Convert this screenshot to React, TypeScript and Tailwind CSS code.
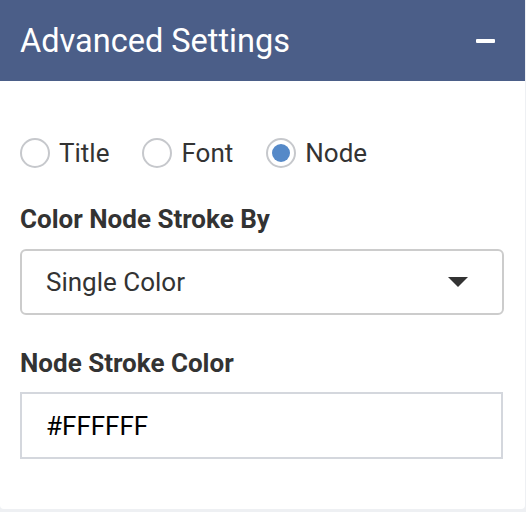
import React, { useState } from "react";

const options = ["Title", "Font", "Node"];

function Radio({ label, checked, onClick }: { label: string; checked: boolean; onClick: () => void }) {
  return (
    <button onClick={onClick} className="flex items-center gap-[9px]">
      <span className="w-[30px] h-[30px] rounded-full border-2 border-[#c6c8cc] bg-white flex items-center justify-center">
        {checked && <span className="w-[18px] h-[18px] rounded-full bg-[#5589c8]" />}
      </span>
      <span className="text-[26px] leading-[30px] text-[#333333]">{label}</span>
    </button>
  );
}

export default function App() {
  const [tab, setTab] = useState("Node");
  return (
    <div className="w-[526px] h-[512px] bg-[#eef0f3] font-['Roboto',sans-serif]">
      <div className="w-[525px] h-[509px] bg-white rounded-b-[4px] flex flex-col">
        <div className="h-[81px] bg-[#4b5e88] flex items-center justify-between pl-[20px] pr-[30px]">
          <h1 className="text-[32.5px] leading-[40px] text-white">Advanced Settings</h1>
          <span className="w-[19px] h-[4px] bg-white rounded-[1px]" />
        </div>
        <div className="px-[20px] pt-[57px]">
          <div className="flex gap-[33px]">
            {options.map((o) => (
              <Radio key={o} label={o} checked={tab === o} onClick={() => setTab(o)} />
            ))}
          </div>
          <div className="mt-[36px] text-[26px] leading-[30px] font-bold text-[#333333]">Color Node Stroke By</div>
          <div className="mt-[15px] w-[484px] h-[66px] border-2 border-[#cccccc] rounded-[6px] flex items-center justify-between pl-[24px] pr-[34px]">
            <span className="text-[26px] leading-[30px] text-[#333333]">Single Color</span>
            <svg width="20" height="10" viewBox="0 0 20 10">
              <path d="M0 0 L20 0 L10 10 Z" fill="#333333" />
            </svg>
          </div>
          <div className="mt-[33px] text-[26px] leading-[30px] font-bold text-[#333333]">Node Stroke Color</div>
          <div className="mt-[14px] w-[483px] h-[67px] border-2 border-[#d4d7dd] flex items-center pl-[24px]">
            <span className="text-[26px] leading-[30px] text-black">#FFFFFF</span>
          </div>
        </div>
      </div>
    </div>
  );
}
